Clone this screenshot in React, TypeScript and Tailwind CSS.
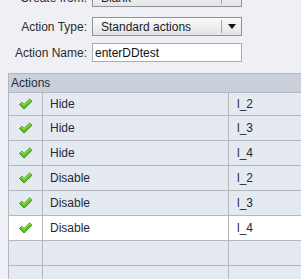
import React from 'react';

const Check: React.FC = () => (
  <svg width="15" height="12" viewBox="0 0 16 13">
    <path
      d="M1.5 7 L4 4.5 L6.5 7 L12.5 1 L15 3.5 L6.5 12 Z"
      fill="#5cc21c"
      stroke="#2f8a0c"
      strokeWidth="1"
      strokeLinejoin="round"
    />
    <path d="M3 6.5 L4 5.5 L6.5 8 L12.5 2 L13.5 3" fill="none" stroke="#a8ec6c" strokeWidth="1" />
  </svg>
);

const Select: React.FC<{ value: string }> = ({ value }) => (
  <div className="flex h-[19px] w-[150px] items-center border border-[#8f9399] bg-gradient-to-b from-[#fafafa] to-[#e3e4e6]">
    <span className="flex-1 pl-2 text-[12px] text-[#1c1c1c]">{value}</span>
    <span className="h-[13px] w-px bg-[#a6a8ab]" />
    <span className="flex w-[19px] justify-center">
      <svg width="8" height="5" viewBox="0 0 8 5">
        <path d="M0 0 H8 L4 5 Z" fill="#111" />
      </svg>
    </span>
  </div>
);

const rows = [
  { action: 'Hide', target: 'l_2' },
  { action: 'Hide', target: 'l_3' },
  { action: 'Hide', target: 'l_4' },
  { action: 'Disable', target: 'l_2' },
  { action: 'Disable', target: 'l_3' },
  { action: 'Disable', target: 'l_4', selected: true },
];

const App: React.FC = () => {
  return (
    <div
      className="h-[279px] w-[301px] overflow-hidden bg-[#eff0f5] text-[12px]"
      style={{ fontFamily: '"Liberation Sans", Arial, sans-serif' }}
    >
      {/* Form */}
      <div className="-mt-[12px] flex flex-col">
        <div className="flex items-center">
          <span className="w-[88px] pr-[1px] text-right text-[#2b2b2b]">Create from:</span>
          <div className="ml-[4px]">
            <Select value="Blank" />
          </div>
        </div>
        <div className="mt-[10px] flex items-center">
          <span className="w-[88px] pr-[1px] text-right text-[#2b2b2b]">Action Type:</span>
          <div className="ml-[4px]">
            <Select value="Standard actions" />
          </div>
        </div>
        <div className="mt-[7px] flex items-center">
          <span className="w-[88px] pr-[1px] text-right text-[#2b2b2b]">Action Name:</span>
          <div className="ml-[4px] flex h-[19px] w-[150px] items-center border border-[#a9abae] bg-white pl-[2px] text-[#111]">
            enterDDtest
          </div>
        </div>
      </div>

      {/* Actions table */}
      <div className="ml-[8px] mt-[11px] border-l border-t border-[#b4b7bd]">
        <div className="flex h-[19px] items-center border-b border-[#b4b7bd] bg-[#c9d0db] pl-[2px] text-[#1e2a38]">
          Actions
        </div>
        {rows.map((r, i) => (
          <div
            key={i}
            className={`flex border-b border-[#b4b7bd] text-[#1e2a38] ${i === 0 ? 'h-[23px]' : 'h-[25px]'} ${
              r.selected ? 'bg-white' : 'bg-[#e5e9f0]'
            }`}
          >
            <div className="flex w-[34px] items-center justify-center border-r border-[#b4b7bd]">
              <Check />
            </div>
            <div className="flex w-[186px] items-center border-r border-[#b4b7bd] pl-[7px]">{r.action}</div>
            <div className="flex flex-1 items-center pl-[8px]">{r.target}</div>
          </div>
        ))}
        {[0, 1].map((i) => (
          <div key={`e${i}`} className="flex h-[25px] border-b border-[#b4b7bd] bg-[#e5e9f0]">
            <div className="w-[34px] border-r border-[#b4b7bd]" />
            <div className="w-[186px] border-r border-[#b4b7bd]" />
            <div className="flex-1" />
          </div>
        ))}
      </div>
    </div>
  );
};

export default App;
